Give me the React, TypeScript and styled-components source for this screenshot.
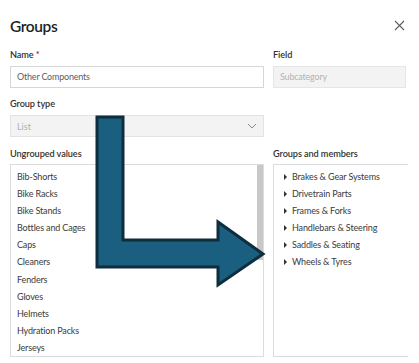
import React from 'react';
import styled, { createGlobalStyle } from 'styled-components';

const ungrouped = [
  'Bib-Shorts',
  'Bike Racks',
  'Bike Stands',
  'Bottles and Cages',
  'Caps',
  'Cleaners',
  'Fenders',
  'Gloves',
  'Helmets',
  'Hydration Packs',
  'Jerseys',
];

const groups = [
  'Brakes & Gear Systems',
  'Drivetrain Parts',
  'Frames & Forks',
  'Handlebars & Steering',
  'Saddles & Seating',
  'Wheels & Tyres',
];

const App = () => {
  return (
    <Page>
      <GlobalStyle />
      <Header>
        <Title>Groups</Title>
        <CloseButton aria-label="Close">
          <svg width="11" height="11" viewBox="0 0 11 11">
            <path d="M1 1L10 10M10 1L1 10" stroke="#605e5c" strokeWidth="1.1" />
          </svg>
        </CloseButton>
      </Header>

      <Grid>
        <Field>
          <Label>
            Name <Required>*</Required>
          </Label>
          <Input>Other Components</Input>
        </Field>
        <Field>
          <Label>Field</Label>
          <Input disabled>Subcategory</Input>
        </Field>

        <Field $gap={8}>
          <Label>Group type</Label>
          <Select>
            <span>List</span>
            <svg width="10" height="6" viewBox="0 0 10 6">
              <path d="M1 1L5 5L9 1" stroke="#8a8886" strokeWidth="1" fill="none" />
            </svg>
          </Select>
        </Field>
        <div />

        <Field $gap={9}>
          <Label>Ungrouped values</Label>
          <ListBox>
            <Items>
              {ungrouped.map((v) => (
                <Item key={v}>{v}</Item>
              ))}
            </Items>
            <ScrollTrack>
              <Thumb />
            </ScrollTrack>
          </ListBox>
        </Field>
        <Field $gap={9}>
          <Label>Groups and members</Label>
          <TreeBox>
            {groups.map((g) => (
              <TreeItem key={g}>
                <Caret />
                {g}
              </TreeItem>
            ))}
          </TreeBox>
        </Field>
      </Grid>

      <Arrow width="419" height="363" viewBox="0 0 419 363">
        <polygon
          points="97,117 123,117 123,240 218,240 218,222 263,254 218,285 218,267 97,267"
          fill="#1b5f80"
          stroke="#0e2d3d"
          strokeWidth="3"
          strokeLinejoin="miter"
        />
      </Arrow>
    </Page>
  );
};

const GlobalStyle = createGlobalStyle`
  body {
    margin: 0;
    background: #fff;
    font-family: Lato, "Open Sans", sans-serif;
    color: #323130;
  }
`;

const Page = styled.div`
  position: relative;
  width: 419px;
  height: 363px;
  overflow: hidden;
  padding: 0 0 0 10px;
  box-sizing: border-box;
`;

const Header = styled.div`
  display: flex;
  justify-content: space-between;
  align-items: center;
  height: 47px;
  padding: 4px 14px 0 0;
  box-sizing: border-box;
`;

const Title = styled.h1`
  margin: 0;
  font-size: 15.5px;
  letter-spacing: -0.4px;
  font-weight: 600;
  color: #201f1e;
`;

const CloseButton = styled.div`
  display: flex;
  width: 11px;
  height: 11px;
`;

const Grid = styled.div`
  display: grid;
  grid-template-columns: 254px 133px;
  column-gap: 9px;
`;

const Field = styled.div<{ $gap?: number }>`
  display: flex;
  flex-direction: column;
  margin-top: ${(p) => p.$gap ?? 0}px;
`;

const Label = styled.div`
  font-size: 9.2px;
  letter-spacing: -0.1px;
  font-weight: 600;
  line-height: 16px;
  height: 16px;
  margin-bottom: 3px;
  color: #323130;
`;

const Required = styled.span`
  color: #a4262c;
`;

const Input = styled.div<{ disabled?: boolean }>`
  height: 22px;
  box-sizing: border-box;
  border: 1px solid ${(p) => (p.disabled ? '#e6e6e6' : '#d6d6d6')};
  background: ${(p) => (p.disabled ? '#f3f3f3' : '#fff')};
  color: ${(p) => (p.disabled ? '#b3b3b3' : '#605e5c')};
  font-size: 9px;
  letter-spacing: -0.2px;
  line-height: 20px;
  padding: 0 6px;
`;

const Select = styled.div`
  display: flex;
  align-items: center;
  justify-content: space-between;
  height: 22px;
  box-sizing: border-box;
  border: 1px solid #e3e3e3;
  background: #f3f3f3;
  color: #b0b0b0;
  font-size: 9px;
  padding: 0 6px;
`;

const ListBox = styled.div`
  display: flex;
  height: 193px;
  box-sizing: border-box;
  border: 1px solid #dcdcdc;
  margin-top: -1px;
  background: #fff;
`;

const Items = styled.div`
  flex: 1;
  padding: 3px 0 0 6px;
`;

const Item = styled.div`
  font-size: 9px;
  letter-spacing: -0.15px;
  line-height: 17.1px;
  color: #3b3a39;
`;

const ScrollTrack = styled.div`
  width: 6px;
`;

const Thumb = styled.div`
  width: 6px;
  height: 95px;
  background: #c8c8c8;
`;

const TreeBox = styled.div`
  height: 193px;
  width: 135px;
  box-sizing: border-box;
  border: 1px solid #dcdcdc;
  border-right: none;
  margin-top: -1px;
  padding: 3px 0 0 10px;
`;

const TreeItem = styled.div`
  display: flex;
  align-items: center;
  gap: 5px;
  font-size: 9px;
  letter-spacing: -0.15px;
  line-height: 17.1px;
  color: #3b3a39;
`;

const Caret = styled.span`
  width: 0;
  height: 0;
  border-top: 3px solid transparent;
  border-bottom: 3px solid transparent;
  border-left: 3.5px solid #323130;
`;

const Arrow = styled.svg`
  position: absolute;
  left: 0;
  top: 0;
  pointer-events: none;
`;

export default App;
